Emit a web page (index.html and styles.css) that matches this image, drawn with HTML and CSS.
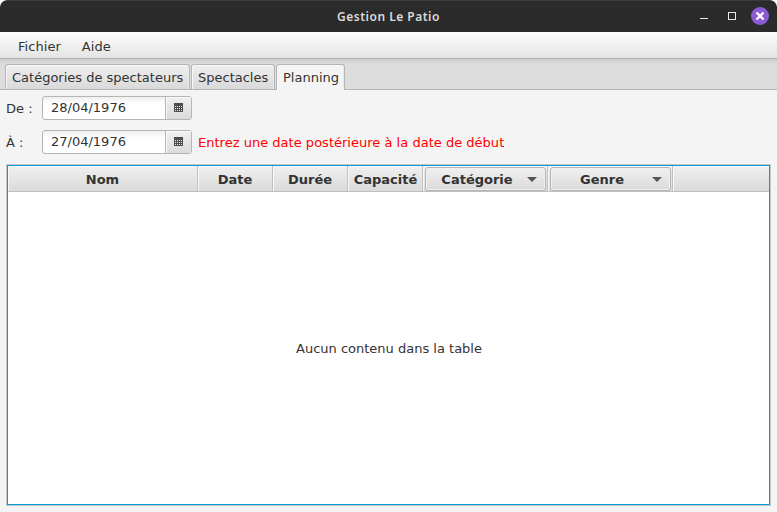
FILE: index.html
```html
<!DOCTYPE html>
<html lang="fr">
<head>
<meta charset="utf-8">
<title>Gestion Le Patio</title>
<link rel="stylesheet" href="styles.css">
</head>
<body>
<div class="window">
  <header class="titlebar">
    <span class="title">Gestion Le Patio</span>
    <svg class="controls" width="72" height="20" viewBox="0 0 72 20">
      <path d="M2 12.500h8" stroke="#e8e8e8"/>
      <rect x="30.500" y="6.500" width="7" height="7" fill="none" stroke="#e8e8e8"/>
      <circle cx="62" cy="10" r="9" fill="#8b5bd6"/>
      <path d="M58.500 6.500l7 7m0-7l-7 7" stroke="#fff" stroke-width="2.300"/>
    </svg>
  </header>
  <nav class="menubar"><span class="menu">Fichier</span><span class="menu">Aide</span></nav>
  <div class="tabs">
    <div class="tab tab-categories">Catégories de spectateurs</div>
    <div class="tab tab-shows">Spectacles</div>
    <div class="tab tab-planning selected">Planning</div>
  </div>
  <main class="content">
    <div class="row">
      <span class="label">De :</span>
      <div class="picker"><span class="value">28/04/1976</span><span class="pick">
        <svg width="9" height="9" viewBox="0 0 9 9"><path d="M0 0h9v9H0z" fill="#4d4d4d"/><path d="M1 3.500h7M1 5.500h7M1 7.500h7" stroke="#e8e8e8" stroke-dasharray="1 1"/></svg>
      </span></div>
    </div>
    <div class="row">
      <span class="label">À :</span>
      <div class="picker"><span class="value">27/04/1976</span><span class="pick">
        <svg width="9" height="9" viewBox="0 0 9 9"><path d="M0 0h9v9H0z" fill="#4d4d4d"/><path d="M1 3.500h7M1 5.500h7M1 7.500h7" stroke="#e8e8e8" stroke-dasharray="1 1"/></svg>
      </span></div>
      <span class="error">Entrez une date postérieure à la date de début</span>
    </div>
    <section class="table">
      <div class="head">
        <div class="col">Nom</div>
        <div class="col">Date</div>
        <div class="col">Durée</div>
        <div class="col">Capacité</div>
        <div class="col"><div class="menu-button"><span class="caption">Catégorie</span><svg width="10" height="5" viewBox="0 0 10 5"><path d="M0 0h10L5 5z" fill="#555"/></svg></div></div>
        <div class="col"><div class="menu-button"><span class="caption">Genre</span><svg width="10" height="5" viewBox="0 0 10 5"><path d="M0 0h10L5 5z" fill="#555"/></svg></div></div>
        <div class="filler"></div>
      </div>
      <div class="placeholder">Aucun contenu dans la table</div>
    </section>
  </main>
</div>
</body>
</html>
```
FILE: styles.css
```css
* { box-sizing: border-box; }
body {
  margin: 0;
  background: #fff;
  color: #333;
  font: 13px/16px "DejaVu Sans", sans-serif;
  white-space: nowrap;
}
svg { display: block; flex: none; }
.window {
  width: 777px;
  height: 512px;
  display: flex;
  flex-direction: column;
  background: #f4f4f4;
  border-radius: 7px 7px 0 0;
  overflow: hidden;
}
.titlebar {
  height: 32px;
  flex: none;
  display: grid;
  grid-template-columns: 1fr auto 1fr;
  align-items: center;
  background: #2b2b2b;
  border-top: 1px solid #3b3b3b;
  border-radius: 7px 7px 0 0;
}
.title {
  grid-column: 2;
  color: #dadada;
  font: 600 12px/16px "Noto Sans", sans-serif;
  letter-spacing: 0.5px;
}
.controls { justify-self: end; margin: 0 7px 1px 0; }
.menubar {
  height: 27px;
  flex: none;
  display: flex;
  gap: 21px;
  padding: 7px 0 0 18px;
  background: linear-gradient(#fdfdfd, #e4e4e4);
  border-bottom: 1px solid #b5b5b5;
  letter-spacing: 0.05px;
}
.tabs {
  height: 31px;
  flex: none;
  display: flex;
  gap: 1px;
  padding: 5px 5px 0;
  background: linear-gradient(#cbcbcb, #ddd 5px);
  border: solid #b5b5b5;
  border-width: 0 0 1px;
}
.tab {
  height: 25px;
  padding: 5px 0 0 6px;
  border: 1px solid #b5b5b5;
  border-bottom: 0;
  border-radius: 3px 3px 0 0;
  background: linear-gradient(#efefef, #d9d9d9);
  box-shadow: inset 1px 1px #f8f8f8, inset -1px 0 #e9e9e9;
}
.tab-categories { width: 185px; }
.tab-shows { width: 84px; }
.tab-planning { width: 69px; }
.tab.selected { height: 26px; background: #f4f4f4; }
.content {
  flex: 1;
  display: flex;
  flex-direction: column;
  padding: 6px 6px;
}
.row { display: flex; height: 24px; margin-bottom: 10px; align-items: center; }
.label { width: 36px; padding-top: 2px; }
.picker {
  width: 150px;
  height: 24px;
  display: flex;
  border: 1px solid #b5b5b5;
  border-radius: 3px;
  background: linear-gradient(#efefef, #fff 7px);
  overflow: hidden;
}
.value { width: 122px; padding: 3px 0 0 8px; }
.pick {
  flex: 1;
  display: flex;
  justify-content: center;
  padding: 6px 1px 0 0;
  border-left: 1px solid #b5b5b5;
  background: linear-gradient(#f1f1f1, #dadada);
  box-shadow: inset 1px 1px #fafafa;
}
.error { margin-left: 6px; padding-top: 2px; color: red; letter-spacing: 0.015px; }
.table {
  width: 765px;
  height: 342px;
  display: flex;
  flex-direction: column;
  background: #fff;
  border: 1px solid #c8c8c8;
  box-shadow: inset 0 0 0 1px #039ed3;
  padding: 1px;
}
.head {
  height: 26px;
  display: grid;
  grid-template-columns: 190px 75px 75px 75px 125px 125px 1fr;
  background: linear-gradient(#f0f0f0, #dadada);
  border-bottom: 1px solid #c0c0c0;
  font-weight: bold;
}
.col {
  display: flex;
  align-items: center;
  justify-content: center;
  padding-top: 2px;
  border-right: 1px solid #c0c0c0;
  box-shadow: inset 1px 1px #f8f8f8;
}
.col:nth-child(4) { padding-left: 1px; }
.filler { box-shadow: inset 1px 1px #f8f8f8; }
.menu-button {
  width: 121px;
  height: 24px;
  margin: -1px 0 0 1px;
  display: flex;
  align-items: center;
  padding: 1px 8px 0 1px;
  border: 1px solid #b5b5b5;
  border-radius: 3px;
  background: linear-gradient(#f1f1f1, #dadada);
  box-shadow: inset 0 0 0 1px #f0f0f0;
}
.caption { flex: 1; padding-top: 1px; text-align: center; }
.placeholder { flex: 1; display: grid; place-items: center; padding: 2px 0 0 1px; }
```
